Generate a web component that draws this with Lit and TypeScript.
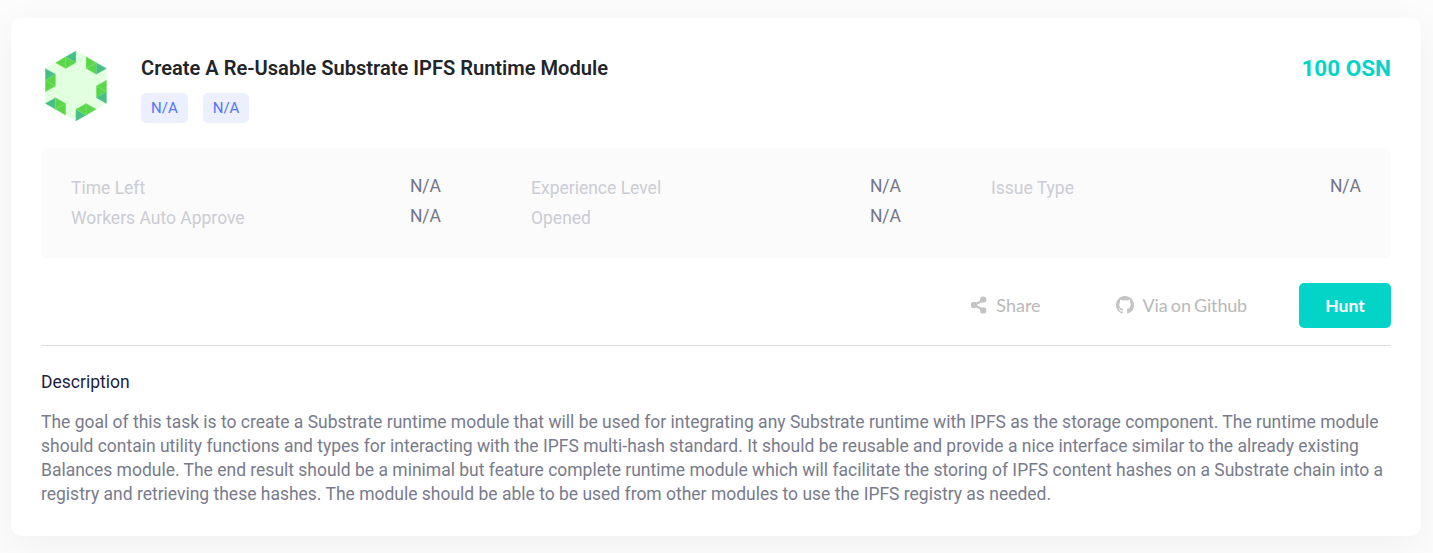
import { LitElement, html, css, svg } from "lit";
import { customElement } from "lit/decorators.js";

// Triangles on a grid of 6 columns by 12 half-steps; "d" is the dark tint, "g" the green one.
const TRIANGLES: [string, number[]][] = [
  ["d", [3, 0, 3, 2, 2, 1]], ["g", [1, 2, 2, 1, 2, 3]], ["g", [2, 1, 3, 2, 2, 3]],
  ["g", [4, 1, 4, 3, 5, 2]], ["g", [4, 3, 5, 2, 5, 4]], ["d", [5, 2, 5, 4, 6, 3]],
  ["g", [6, 5, 5, 6, 6, 7]], ["g", [5, 6, 6, 7, 5, 8]], ["d", [5, 8, 6, 7, 6, 9]],
  ["d", [3, 10, 3, 12, 4, 11]], ["g", [3, 10, 4, 9, 4, 11]], ["g", [4, 9, 5, 10, 4, 11]],
  ["d", [0, 9, 1, 8, 1, 10]], ["g", [1, 8, 1, 10, 2, 9]], ["g", [2, 9, 2, 11, 1, 10]],
  ["d", [0, 3, 0, 5, 1, 4]], ["g", [0, 5, 1, 4, 1, 6]], ["g", [0, 5, 0, 7, 1, 6]],
];
const COL = 10.2;
const ROW = 5.83;
const pts = (p: number[]) => p.map((v, i) => (v * (i % 2 ? ROW : COL)).toFixed(2)).join(" ");

const DETAILS = ["Time Left", "Experience Level", "Issue Type", "Workers Auto Approve", "Opened"];

@customElement("app-root")
export class AppRoot extends LitElement {
  static styles = css`
    :host { display: block; box-sizing: border-box; height: 553px; padding: 18px 12px 17px 11px; overflow: hidden;
      background: #fcfcfc; font-family: Roboto, "Liberation Sans", sans-serif; }
    .card { box-sizing: border-box; height: 518px; padding: 30px; background: #fff; border-radius: 10px;
      box-shadow: 0 10px 40px rgba(0, 0, 0, 0.05); }
    .head { display: flex; height: 100px; }
    .avatar { flex: none; width: 62px; height: 71px; margin: 3px 34px 0 4px; }
    .base { fill: #e2ffe0; }
    .g { fill: #5ad64a; stroke: #7fe372; stroke-width: 0.4; }
    .d { fill: #45bf86; stroke: #62cc93; stroke-width: 0.3; }
    .intro { flex: 1; }
    .title { margin: 5px 0 10px; font-size: 20.08px; line-height: 30px; font-weight: 600; color: #212529; }
    .tags { display: flex; gap: 15px; }
    .tag { box-sizing: border-box; width: 46.7px; height: 30px; padding: 0 10px; border-radius: 5px; background: #eceffe;
      font-size: 15px; line-height: 30px; color: #5274ff; }
    .price { margin-top: 5px; font-size: 22.5px; line-height: 31px; font-weight: 700; color: #04d4c8; }
    .details { box-sizing: border-box; height: 110px; padding: 25px 30px; display: grid; background: #fbfbfb;
      grid-template-columns: repeat(3, 370px); column-gap: 90px; grid-auto-rows: 30px; border-radius: 5px; }
    .row { display: flex; justify-content: space-between; font-size: 17.5px; line-height: 30px; }
    .label { color: #cbccd4; }
    .value { color: #72758a; line-height: 26px; }
    .actions { display: flex; justify-content: flex-end; align-items: center; height: 88px; box-sizing: border-box;
      padding: 25px 0 17px; border-bottom: 1px solid #dcdcdc; font-family: Lato, sans-serif; font-size: 18px; color: #b9b9b9; }
    .link { display: flex; align-items: center; gap: 9px; margin-bottom: 2px; }
    .link svg { width: 18px; height: 18px; fill: #c4c4c4; }
    .share { margin-right: 75px; }
    .github { margin-right: 52px; word-spacing: -1.1px; letter-spacing: -0.18px; }
    .hunt { width: 92px; height: 45px; padding: 1px 0 0; border: 0; border-radius: 5px; background: #04d4c8; color: #fff;
      font: 700 17.5px/44px Lato, sans-serif; }
    .subtitle { margin: 22px 0 14px; font-size: 17.5px; line-height: 28px; font-weight: 400; color: #1c1f3f; }
    .text { margin: 0; font-size: 17.49px; line-height: 24px; color: #787b8c; }
  `;

  render() {
    return html`
      <div class="card">
        <div class="head">
          <svg class="avatar" viewBox="-0.3 0 62 71">
            <polygon class="base" points=${pts([3, 0, 6, 3, 6, 9, 3, 12, 0, 9, 0, 3])}></polygon>
            ${TRIANGLES.map(([tint, p]) => svg`<polygon class=${tint} points=${pts(p)}></polygon>`)}
          </svg>
          <div class="intro">
            <h1 class="title">Create A Re-Usable Substrate IPFS Runtime Module</h1>
            <div class="tags"><span class="tag">N/A</span><span class="tag">N/A</span></div>
          </div>
          <div class="price">100 OSN</div>
        </div>
        <div class="details">
          ${DETAILS.map((d) => html`<div class="row"><span class="label">${d}</span><span class="value">N/A</span></div>`)}
        </div>
        <div class="actions">
          <div class="link share">
            <svg viewBox="0 0 18 18">
              <path d="M5.2 9 14.3 4M5.2 9 14.3 14" fill="none" stroke="#c4c4c4" stroke-width="2"></path>
              <circle cx="5" cy="9" r="3.2"></circle><circle cx="14.2" cy="3.6" r="3.2"></circle><circle cx="14.2" cy="14.4" r="3.2"></circle>
            </svg>
            <span>Share</span>
          </div>
          <div class="link github">
            <svg viewBox="0 0 16 16">
              <path d="M8 0C3.58 0 0 3.58 0 8c0 3.54 2.29 6.53 5.47 7.59.4.07.55-.17.55-.38 0-.19-.01-.82-.01-1.49-2.01.37-2.53-.49-2.69-.94-.09-.23-.48-.94-.82-1.13-.28-.15-.68-.52-.01-.53.63-.01 1.08.58 1.23.82.72 1.21 1.87.87 2.33.66.07-.52.28-.87.51-1.07-1.78-.2-3.64-.89-3.64-3.95 0-.87.31-1.59.82-2.15-.08-.2-.36-1.02.08-2.12 0 0 .67-.21 2.2.82.64-.18 1.32-.27 2-.27s1.36.09 2 .27c1.53-1.04 2.2-.82 2.2-.82.44 1.1.16 1.92.08 2.12.51.56.82 1.27.82 2.15 0 3.07-1.87 3.75-3.65 3.95.29.25.54.73.54 1.48 0 1.07-.01 1.93-.01 2.2 0 .21.15.46.55.38A8.01 8.01 0 0 0 16 8c0-4.42-3.58-8-8-8z"></path>
            </svg>
            <span>Via on Github</span>
          </div>
          <button class="hunt">Hunt</button>
        </div>
        <h2 class="subtitle">Description</h2>
        <p class="text">The goal of this task is to create a Substrate runtime module that will be used for integrating any Substrate runtime with IPFS as the storage component. The runtime module should contain utility functions and types for interacting with the IPFS multi-hash standard. It should be reusable and provide a nice interface similar to the already existing Balances module. The end result should be a minimal but feature complete runtime module which will facilitate the storing of IPFS content hashes on a Substrate chain into a registry and retrieving these hashes. The module should be able to be used from other modules to use the IPFS registry as needed.</p>
      </div>
    `;
  }
}
